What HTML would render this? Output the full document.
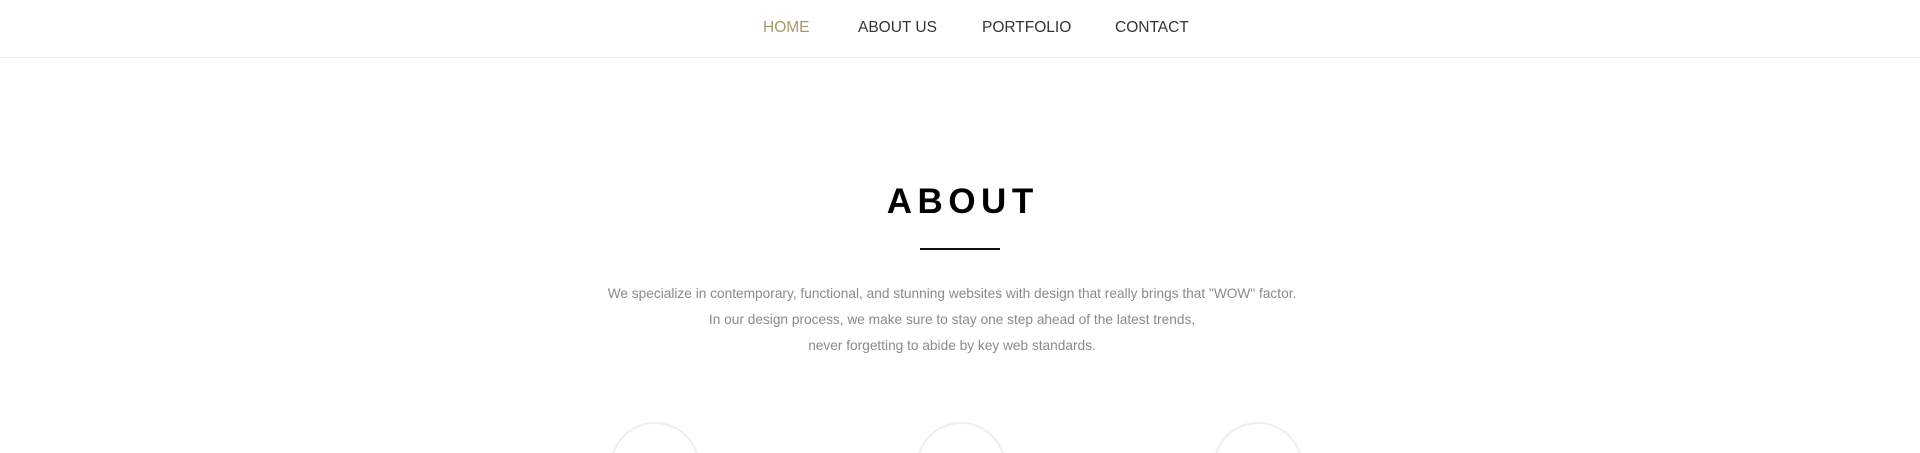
<!DOCTYPE html>
<html style="overflow:hidden;height:453px"><head><style>
body{margin:0;width:1920px;height:453px;overflow:hidden;background:#fff;font-family:"Liberation Sans",sans-serif;position:relative}
.nav{position:absolute;top:0;left:0;width:1920px;height:57px;border-bottom:1px solid #eee}
.nav span{position:absolute;top:18px;font-size:15.5px;color:#333;line-height:20px;white-space:nowrap}
h1{position:absolute;top:179px;left:0;width:1920px;text-align:center;margin:0;font-size:35px;font-weight:bold;letter-spacing:5.5px;line-height:46px;color:#000;text-indent:5.5px}
.ul{position:absolute;left:920px;top:248px;width:80px;height:2px;background:#111}
.p{position:absolute;top:281px;left:-8px;width:1920px;text-align:center;font-size:13.7px;line-height:26px;color:#8a8a8a}
.clip{position:absolute;left:0;top:420px;width:1920px;height:33px;overflow:hidden}
.c{position:absolute;top:2px;width:86px;height:86px;border:2px solid #eee;border-radius:50%}
</style></head><body>
<div class="nav">
<span style="left:763px;color:#a8976b">HOME</span>
<span style="left:858px">ABOUT US</span>
<span style="left:982px">PORTFOLIO</span>
<span style="left:1115px">CONTACT</span>
</div>
<h1>ABOUT</h1>
<div class="ul"></div>
<div class="p">We specialize in contemporary, functional, and stunning websites with design that really brings that "WOW" factor.<br>In our design process, we make sure to stay one step ahead of the latest trends,<br>never forgetting to abide by key web standards.</div>
<div class="clip">
<div class="c" style="left:610px"></div>
<div class="c" style="left:916px"></div>
<div class="c" style="left:1213px"></div>
</div>
</body></html>
